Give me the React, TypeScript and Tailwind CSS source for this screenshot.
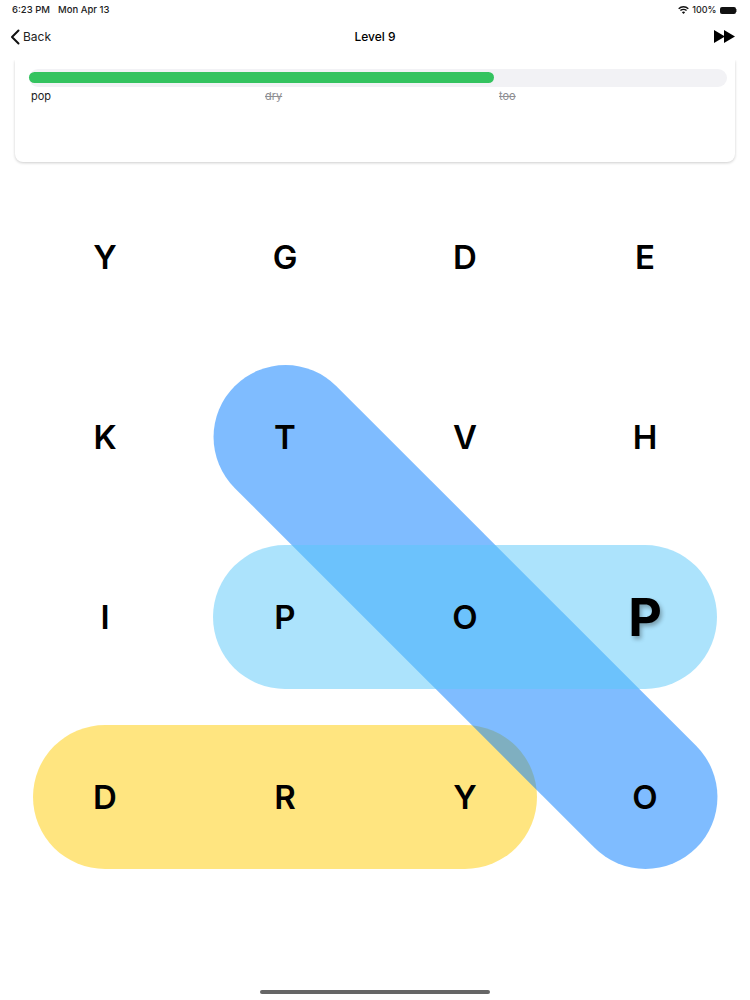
const font = { fontFamily: "Inter, 'Liberation Sans', sans-serif" };

const letters = ["Y", "G", "D", "E", "K", "T", "V", "H", "I", "P", "O", "P", "D", "R", "Y", "O"];

function StatusBar() {
  return (
    <div className="flex h-[18px] items-center justify-between pl-3 pr-[13px] pt-[2px] text-[9.5px] font-medium text-[#222]">
      <div className="flex gap-[8px]">
        <span>6:23 PM</span>
        <span>Mon Apr 13</span>
      </div>
      <div className="flex items-center gap-[3px]">
        <svg width="11" height="8" viewBox="0 0 22 16" fill="#111">
          <path d="M11 16l-3.2-3.6a4.6 4.6 0 0 1 6.4 0z" />
          <path d="M5.8 10.2l-1.9-2.1a10.4 10.4 0 0 1 14.2 0l-1.9 2.1a7.6 7.6 0 0 0-10.4 0z" />
          <path d="M2.3 6.4L.4 4.3a15.6 15.6 0 0 1 21.2 0l-1.9 2.1a12.8 12.8 0 0 0-17.4 0z" />
        </svg>
        <span className="text-[9px]">100%</span>
        <div className="flex items-center">
          <div className="h-[7px] w-[16px] rounded-[2px] bg-[#111]" />
          <div className="ml-[0.5px] h-[3px] w-[1px] bg-[#999]" />
        </div>
      </div>
    </div>
  );
}

function NavBar() {
  return (
    <div className="relative flex h-[42px] items-center justify-between pb-[5px] pl-[10px] pr-[15px] bg-white">
      <div className="flex items-center gap-[3px] text-[12px] text-[#222]">
        <svg width="10" height="16" viewBox="0 0 10 16" fill="none" stroke="#111" strokeWidth="2" strokeLinecap="round" strokeLinejoin="round">
          <path d="M8.5 1.5L2 8l6.5 6.5" />
        </svg>
        <span>Back</span>
      </div>
      <span className="absolute left-0 right-0 text-center text-[12px] font-medium text-black">Level 9</span>
      <svg width="21" height="13" viewBox="0 0 21 13" fill="#000">
        <path d="M0 0l11 6.5L0 13z" />
        <path d="M10 0l11 6.5L10 13z" />
      </svg>
    </div>
  );
}

function WordCard() {
  return (
    <div className="mx-[15px] h-[102px] rounded-b-[8px] bg-white pl-[14px] pr-[8px] pt-[9px] shadow-[0_1px_3px_rgba(0,0,0,0.2)]">
      <div className="relative h-[18px] rounded-full bg-[#f2f2f5]">
        <div className="absolute left-0 top-[3px] h-[11px] w-[465px] rounded-full bg-[#34c35f]" />
      </div>
      <div className="mt-[2px] flex pl-[2px] text-[11px] leading-[14px]">
        <span className="w-[234px] shrink-0 text-[#222]">pop</span>
        <span className="w-[234px] shrink-0 text-[#8e8e93] line-through">dry</span>
        <span className="w-[234px] shrink-0 text-[#8e8e93] line-through">too</span>
      </div>
    </div>
  );
}

function Board() {
  return (
    <div className="relative mx-[15px] mt-[5px] h-[720px]">
      {/* found words sit behind the letters */}
      <div className="absolute left-[18px] top-[558px] h-[144px] w-[504px] rounded-full bg-[#ffcc00]/50" />
      <div className="absolute left-[123.5px] top-[378px] h-[144px] w-[653px] rotate-45 rounded-full bg-[#007aff]/50" />
      <div className="absolute left-[198px] top-[378px] h-[144px] w-[504px] rounded-full bg-[#5ac8fa]/50" />
      <div className="relative grid grid-cols-4 grid-rows-[repeat(4,180px)]">
        {letters.map((l, i) => (
          <div key={i} className="flex items-center justify-center pt-[1px]">
            {i === 11 ? (
              <span className="text-[52px] font-bold text-black [text-shadow:2px_3px_4px_rgba(0,0,0,0.3)]">{l}</span>
            ) : (
              <span className="text-[33px] font-semibold text-black">{l}</span>
            )}
          </div>
        ))}
      </div>
    </div>
  );
}

export default function App() {
  return (
    <div className="relative h-[1000px] w-[750px] overflow-hidden bg-white" style={font}>
      <StatusBar />
      <NavBar />
      <WordCard />
      <Board />
      <div className="absolute bottom-[6px] left-[260px] h-[4px] w-[230px] rounded-full bg-[#666]" />
    </div>
  );
}
